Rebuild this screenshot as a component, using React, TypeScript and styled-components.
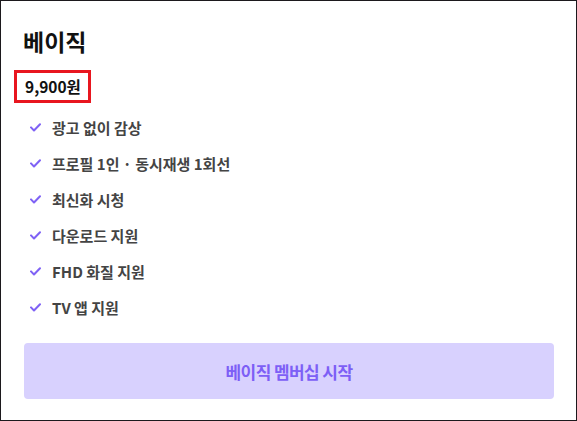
import React from 'react';
import styled, { createGlobalStyle } from 'styled-components';

const GlobalStyle = createGlobalStyle`
    html, body {
        margin: 0;
        padding: 0;
        background: #fff;
    }
    * {
        box-sizing: border-box;
    }
`

const Card = styled.div`
    width: 577px;
    height: 421px;
    border: 1px solid #1c191d;
    background: #fff;
    display: flex;
    flex-direction: column;
    padding: 22px 23px 0 22px;
    font-family: "Noto Sans CJK KR", "Noto Sans", sans-serif;
    color: #111;
`

const Title = styled.h2`
    margin: 0;
    font-size: 23px;
    font-weight: 700;
    line-height: 36px;
    color: #111;
`

const Price = styled.div`
    align-self: flex-start;
    margin: 11px 0 0 -9px;
    padding: 0 7px 0 8px;
    border: 3px solid #e8161f;
    font-size: 15.5px;
    font-weight: 700;
    line-height: 27px;
    color: #111;
`

const FeatureList = styled.ul`
    list-style: none;
    margin: 6px 0 0 0;
    padding: 0 0 0 7px;
    display: flex;
    flex-direction: column;
`

const Feature = styled.li`
    display: flex;
    align-items: center;
    gap: 11px;
    height: 36px;
    font-size: 15px;
    font-weight: 700;
    color: #444;
`

const CheckIcon = styled.svg`
    width: 11px;
    height: 9px;
    flex-shrink: 0;
`

const StartButton = styled.button`
    margin-top: 18px;
    margin-left: 1px;
    height: 56px;
    width: 530px;
    border: none;
    border-radius: 4px;
    background: #d8d1fe;
    color: #7d5ff6;
    font-family: inherit;
    font-size: 17px;
    font-weight: 700;
    letter-spacing: -0.6px;
    cursor: pointer;
`

const features = [
    '광고 없이 감상',
    '프로필 1인 · 동시재생 1회선',
    '최신화 시청',
    '다운로드 지원',
    'FHD 화질 지원',
    'TV 앱 지원',
];

const Check = () => (
    <CheckIcon viewBox="0 0 11 9">
        <path d="M1 4.4 L4 7.5 L10 1.2" fill="none" stroke="#7f62f5" strokeWidth="2" strokeLinecap="round" strokeLinejoin="round" />
    </CheckIcon>
);

const App = () => {
    return (
        <>
            <GlobalStyle />
            <Card>
                <Title>베이직</Title>
                <Price>9,900원</Price>
                <FeatureList>
                    {features.map((feature) => (
                        <Feature key={feature}>
                            <Check />
                            {feature}
                        </Feature>
                    ))}
                </FeatureList>
                <StartButton>베이직 멤버십 시작</StartButton>
            </Card>
        </>
    );
};

export default App;
